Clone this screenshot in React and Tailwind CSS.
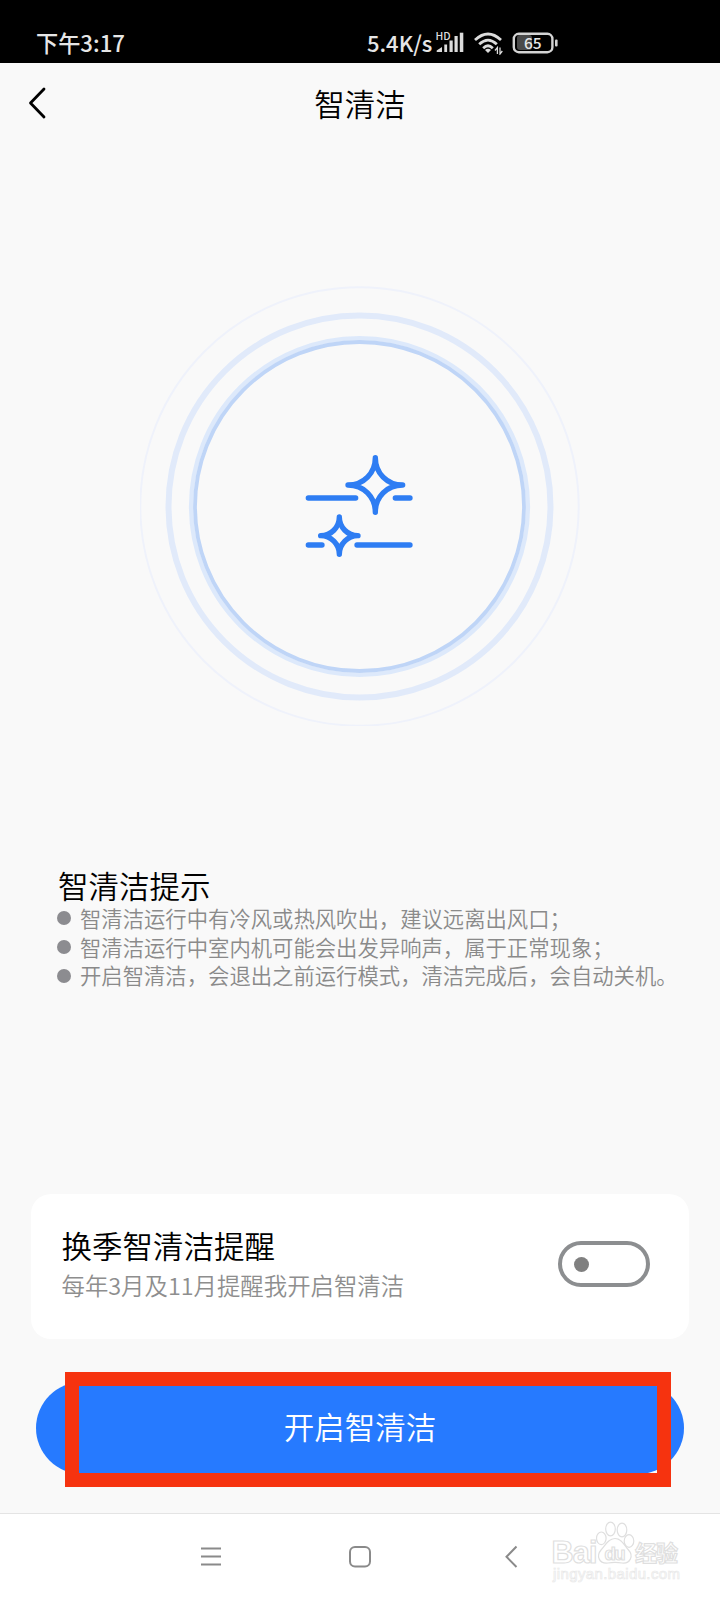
import { useState } from "react";

const tips = [
  "智清洁运行中有冷风或热风吹出，建议远离出风口；",
  "智清洁运行中室内机可能会出发异响声，属于正常现象；",
  "开启智清洁，会退出之前运行模式，清洁完成后，会自动关机。",
];

function StatusBar() {
  return (
    <div className="flex h-[63px] items-start bg-black pl-[36px] pt-[31px] text-[#e6e6e6]">
      <p className="-mt-px w-[331px] whitespace-nowrap text-[22.2px] font-medium leading-[24px]">
        下午3:17
      </p>
      <p className="-mt-px w-[67px] whitespace-nowrap text-[22px] font-medium leading-[24px]">
        5.4K/s
      </p>
      <svg className="h-[24px] w-[30px] overflow-visible" viewBox="0 0 30 24" fill="#dcdcdc">
        <text x="1.5" y="8.5" fontSize="10.5" fontWeight="500" textLength="15">
          HD
        </text>
        <path d="M2.7 21 V19.5 L8 16 V21Z" />
        <rect x="10.3" y="13.5" width="2.8" height="7.5" />
        <rect x="15.5" y="9.5" width="3.2" height="11.5" />
        <rect x="20.5" y="5" width="3.2" height="16" />
        <rect x="25.8" y="1.7" width="3.5" height="19.3" />
      </svg>
      <svg
        className="ml-[8px] h-[24px] w-[32px]"
        viewBox="0 0 32 24"
        fill="none"
        stroke="#dcdcdc"
        strokeWidth="2.8"
      >
        <path d="M3 9 Q16 -3 29 9" />
        <path d="M7.2 13.2 Q16 5 24.8 13.2" />
        <path d="M11.2 17.2 Q16 12.5 20.8 17.2" />
        <path d="M13 19 Q16 16.5 19 19 L16 22Z" fill="#dcdcdc" stroke="none" />
        <path d="M25.4 23 V16.5 L23 19.5 M28 16.5 V23 L30.3 20" strokeWidth="1.3" />
      </svg>
      <svg className="ml-[8px] h-[24px] w-[46px]" viewBox="0 0 46 24">
        <rect x="5" y="4" width="15" height="15" rx="3" fill="#4a4a4a" />
        <rect
          x="1.8"
          y="2.8"
          width="38.6"
          height="18.4"
          rx="5"
          fill="none"
          stroke="#d4d4d4"
          strokeWidth="2.4"
        />
        <rect x="43" y="8.5" width="2.6" height="7" rx="1" fill="#d4d4d4" />
        <text x="12" y="17.6" fontSize="15.5" fontWeight="500" fill="#e6e6e6" textLength="17.5">
          65
        </text>
      </svg>
    </div>
  );
}

function CleanDial() {
  return (
    <svg className="h-[440px] w-[440px]" viewBox="0.5 -0.5 440 440" fill="none">
      <circle cx="220" cy="220" r="219.2" stroke="#eff2fb" strokeWidth="2" />
      <circle cx="220" cy="220" r="191" stroke="#e1eafa" strokeWidth="6" />
      <circle cx="220" cy="220" r="168.4" stroke="#dde9fb" strokeWidth="4.4" />
      <circle cx="220" cy="220" r="164.5" stroke="#bfd5f7" strokeWidth="3.8" />
      <g
        transform="translate(140.5 143.2) scale(0.33333)"
        stroke="#2e7df3"
        strokeWidth="16"
        strokeLinecap="round"
        strokeLinejoin="round"
      >
        <path d="M286 84 C286 130 321 166 368 166 C321 166 286 202 286 248 C286 202 251 166 204 166 C251 166 286 130 286 84Z" />
        <path d="M178 262 C178 293 203 318 234 318 C203 318 178 343 178 374 C178 343 153 318 122 318 C153 318 178 293 178 262Z" />
        <path d="M85 205H227M346 205H390M85 346H126M231 346H390" />
      </g>
    </svg>
  );
}

function Watermark() {
  return (
    <svg
      className="h-[70px] w-[140px] font-['Liberation_Sans','Noto_Sans_CJK_SC',sans-serif]"
      viewBox="0 0 140 70"
      fill="#fff"
      stroke="#dfdfdf"
      strokeWidth="1.2"
    >
      <text x="0.5" y="42.5" fontSize="30.5" fontWeight="700" textLength="46">
        Bai
      </text>
      <ellipse cx="50.3" cy="18.3" rx="4.8" ry="6.3" />
      <ellipse cx="59.5" cy="9" rx="4.8" ry="6.8" />
      <ellipse cx="71" cy="10" rx="4.8" ry="6.8" />
      <ellipse cx="78" cy="21" rx="4.8" ry="6.3" />
      <path d="M64 18.5 C71 18.5 73.5 26 77.5 30 C83 36 79 44 71 43 C66 42 62 42 57 43 C48 44 45 36 50 30 C54 26 57 18.5 64 18.5Z" />
      <text x="53.5" y="40" fontSize="18.5" fontWeight="700" textLength="21">
        du
      </text>
      <text x="84" y="40.5" fontSize="22" fontWeight="700" textLength="43">
        经验
      </text>
      <text x="2" y="58.5" fontSize="15" stroke="#e8e8e8" strokeWidth="0.7" textLength="127">
        jingyan.baidu.com
      </text>
    </svg>
  );
}

export default function App() {
  const [remind, setRemind] = useState(false);

  return (
    <div className="relative flex h-[1600px] w-[720px] flex-col overflow-hidden bg-[#f9f9f9] font-['Noto_Sans_CJK_SC',sans-serif] font-[350] text-black">
      <StatusBar />

      <header className="grid h-[84px] grid-cols-3 items-center px-[27px] pb-[4px]">
        <svg className="h-[32px] w-[20px]" viewBox="0 0 20 32" fill="none">
          <path
            d="M17 2 L3.5 16 L17 30"
            stroke="#000"
            strokeWidth="2.8"
            strokeLinecap="round"
            strokeLinejoin="round"
          />
        </svg>
        <h1 className="text-center text-[30.5px] leading-[40px]">智清洁</h1>
      </header>

      <main className="flex flex-1 flex-col">
        <div className="flex justify-center pt-[139px]">
          <CleanDial />
        </div>

        <section className="h-[328px] pl-[57px] pt-[140px]">
          <h2 className="pl-px text-[30.5px] leading-[38px]">智清洁提示</h2>
          <ul className="text-[21.35px] leading-[28.7px] text-[#8a8a8a]">
            {tips.map((tip) => (
              <li key={tip} className="flex items-center gap-[9px] whitespace-nowrap">
                <span className="size-[14px] rounded-full bg-[#8c8c90]" />
                {tip}
              </li>
            ))}
          </ul>
        </section>

        <section className="mx-[31px] mt-[140px] flex h-[145px] shrink-0 items-center justify-between rounded-[20px] bg-white pb-[5px] pl-[30.5px] pr-[39px]">
          <div>
            <h2 className="text-[30.5px] leading-[42px]">换季智清洁提醒</h2>
            <p className="text-[23.4px] leading-[38px] text-[#8e8e8e]">
              每年3月及11月提醒我开启智清洁
            </p>
          </div>
          <button
            onClick={() => setRemind(!remind)}
            className="flex h-[46px] w-[92px] items-center rounded-full border-4 border-[#8c8e90] px-[12px]"
          >
            <span className="size-[15px] rounded-full bg-[#808080]" />
          </button>
        </section>

        <div className="mt-[43px] pl-[36px]">
          <button className="h-[92px] w-[648px] rounded-full bg-[#267aff] pb-[2px] text-[30.5px] text-white">
            开启智清洁
          </button>
        </div>
      </main>

      <nav className="flex h-[87px] shrink-0 border-t border-[#e4e4e4] bg-white pl-[200px] pt-[31px]">
        <svg className="h-[24px] w-[22px]" viewBox="0 0 22 24">
          <path d="M1 3.5H21M1 11.5H21M1 19.5H21" stroke="#8a8a8a" strokeWidth="1.9" />
        </svg>
        <svg className="ml-[126px] h-[24px] w-[24px]" viewBox="0 0 24 24" fill="none">
          <rect x="2" y="2" width="20" height="19.5" rx="5" stroke="#8a8a8a" strokeWidth="2" />
        </svg>
        <svg className="ml-[132px] h-[24px] w-[16px]" viewBox="0 0 16 24" fill="none">
          <path d="M12.5 1.5 L2.5 11.8 L12.5 22" stroke="#8a8a8a" strokeWidth="2" />
        </svg>
      </nav>

      {/* highlight frame around the start button */}
      <div className="pointer-events-none absolute left-[65px] top-[1372px] h-[115px] w-[606px] border-[14px] border-[#f6330f]" />
      <div className="absolute left-[551px] top-[1520px]">
        <Watermark />
      </div>
    </div>
  );
}
